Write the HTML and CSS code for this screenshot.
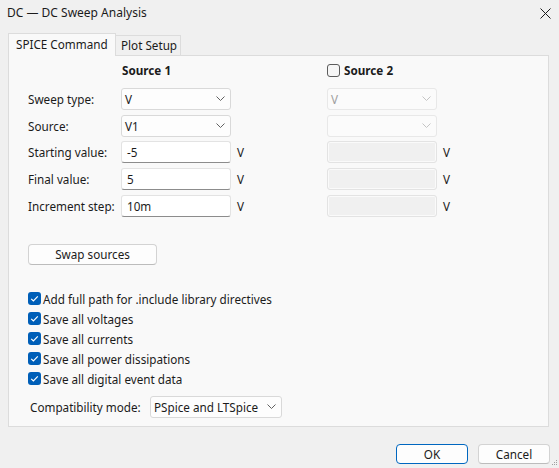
FILE: index.html
```html
<!DOCTYPE html>
<html>
<head>
<meta charset="utf-8">
<title>DC — DC Sweep Analysis</title>
<link rel="stylesheet" href="styles.css">
</head>
<body>
<div class="window">
  <div class="titlebar">
    <span class="title">DC — DC Sweep Analysis</span>
    <svg class="close" width="11" height="11" viewBox="0 0 11 11"><path d="M0.5 0.5L10.5 10.5M10.5 0.5L0.5 10.5" stroke="#1b1b1b" stroke-width="1" fill="none"/></svg>
  </div>
  <div class="tabs">
    <div class="tab active">SPICE Command</div>
    <div class="tab plain">Plot Setup</div>
  </div>
  <div class="panel">
    <div class="form">
      <div></div>
      <div class="head">Source 1</div>
      <div></div>
      <div class="head head2"><span class="cb off"></span>Source 2</div>
      <div></div>

      <div class="lbl">Sweep type:</div>
      <div class="select"><span>V</span><svg class="chev" width="9" height="5" viewBox="0 0 9 5"><path d="M0.5 0.5L4.5 4.5L8.5 0.5" stroke="#616161" fill="none"/></svg></div>
      <div></div>
      <div class="select disabled"><span>V</span><svg class="chev" width="9" height="5" viewBox="0 0 9 5"><path d="M0.5 0.5L4.5 4.5L8.5 0.5" stroke="#c4c4c4" fill="none"/></svg></div>
      <div></div>

      <div class="lbl">Source:</div>
      <div class="select"><span>V1</span><svg class="chev" width="9" height="5" viewBox="0 0 9 5"><path d="M0.5 0.5L4.5 4.5L8.5 0.5" stroke="#616161" fill="none"/></svg></div>
      <div></div>
      <div class="select disabled"><span></span><svg class="chev" width="9" height="5" viewBox="0 0 9 5"><path d="M0.5 0.5L4.5 4.5L8.5 0.5" stroke="#c4c4c4" fill="none"/></svg></div>
      <div></div>

      <div class="lbl">Starting value:</div>
      <div class="input">-5</div>
      <div class="unit">V</div>
      <div class="input disabled"></div>
      <div class="unit">V</div>

      <div class="lbl">Final value:</div>
      <div class="input">5</div>
      <div class="unit">V</div>
      <div class="input disabled"></div>
      <div class="unit">V</div>

      <div class="lbl">Increment step:</div>
      <div class="input">10m</div>
      <div class="unit">V</div>
      <div class="input disabled"></div>
      <div class="unit">V</div>
    </div>

    <button class="btn swap">Swap sources</button>

    <div class="checks">
      <div class="check"><span class="cb on"><svg width="13" height="13" viewBox="0 0 13 13"><path d="M3.2 6.8L5.4 9L9.8 4.4" stroke="#fff" stroke-width="1.2" fill="none"/></svg></span>Add full path for .include library directives</div>
      <div class="check"><span class="cb on"><svg width="13" height="13" viewBox="0 0 13 13"><path d="M3.2 6.8L5.4 9L9.8 4.4" stroke="#fff" stroke-width="1.2" fill="none"/></svg></span>Save all voltages</div>
      <div class="check"><span class="cb on"><svg width="13" height="13" viewBox="0 0 13 13"><path d="M3.2 6.8L5.4 9L9.8 4.4" stroke="#fff" stroke-width="1.2" fill="none"/></svg></span>Save all currents</div>
      <div class="check"><span class="cb on"><svg width="13" height="13" viewBox="0 0 13 13"><path d="M3.2 6.8L5.4 9L9.8 4.4" stroke="#fff" stroke-width="1.2" fill="none"/></svg></span>Save all power dissipations</div>
      <div class="check"><span class="cb on"><svg width="13" height="13" viewBox="0 0 13 13"><path d="M3.2 6.8L5.4 9L9.8 4.4" stroke="#fff" stroke-width="1.2" fill="none"/></svg></span>Save all digital event data</div>
    </div>

    <div class="compat">
      <span class="compat-lbl">Compatibility mode:</span>
      <div class="select wide"><span>PSpice and LTSpice</span><svg class="chev" width="9" height="5" viewBox="0 0 9 5"><path d="M0.5 0.5L4.5 4.5L8.5 0.5" stroke="#616161" fill="none"/></svg></div>
    </div>
  </div>
  <div class="footer">
    <button class="btn ok">OK</button>
    <button class="btn">Cancel</button>
  </div>
  <svg class="grip" width="6" height="6" viewBox="0 0 6 6"><rect x="4" y="0" width="1" height="1" fill="#a0a0a0"/><rect x="2" y="2" width="1" height="1" fill="#a0a0a0"/><rect x="4" y="2" width="1" height="1" fill="#a0a0a0"/><rect x="0" y="4" width="1" height="1" fill="#a0a0a0"/><rect x="2" y="4" width="1" height="1" fill="#a0a0a0"/><rect x="4" y="4" width="1" height="1" fill="#a0a0a0"/></svg>
</div>
</body>
</html>
```

FILE: styles.css
```css
* { box-sizing: border-box; margin: 0; padding: 0; }
html, body { width: 559px; height: 468px; overflow: hidden; }
body {
  background: #f0f0f0;
  font-family: "Noto Sans", "Open Sans", sans-serif;
  font-size: 11.7px;
  color: #1b1b1b;
}
.window { position: relative; width: 559px; height: 468px; display: flex; flex-direction: column; }

.titlebar {
  height: 26px;
  display: flex;
  align-items: center;
  justify-content: space-between;
  padding: 0 8px 0 7px;
  font-size: 12px;
}
.title { line-height: 26px; }
.close { display: block; }

.tabs {
  display: flex;
  align-items: flex-start;
  height: 22px;
  margin: 7px 0 0 8px;
}
.tab {
  position: relative;
  z-index: 1;
  border: 1px solid #dcdcdc;
  border-bottom: none;
  white-space: nowrap;
}
.tab.active {
  height: 23px;
  width: 108px;
  background: #f9f9f9;
  padding: 2px 0 0 7px;
  line-height: 17px;
}
.tab.plain {
  margin-top: 2px;
  height: 20px;
  width: 65px;
  background: #f0f0f0;
  border-left: none;
  padding: 1px 0 0 5px;
  line-height: 17px;
}

.panel {
  margin: 0 10px 0 8px;
  height: 372px;
  background: #f9f9f9;
  border: 1px solid #dcdcdc;
  padding: 6px 0 0 19px;
}

.form {
  display: grid;
  grid-template-columns: 93px 110px 96px 110px 1fr;
  grid-template-rows: 21px repeat(5, 22px);
  row-gap: 4.75px;
}
.head {
  font-weight: bold;
  height: 16px;
  line-height: 16px;
  padding-left: 1px;
  display: flex;
  align-items: center;
}
.head2 { gap: 4px; padding-left: 0; }
.lbl { display: flex; align-items: center; }

.select {
  display: flex;
  align-items: center;
  justify-content: space-between;
  height: 22px;
  background: #fdfdfd;
  border: 1px solid #d9d9d9;
  border-radius: 3px;
  padding: 0 5px 0 3px;
}
.select.disabled { background: #fbfbfb; border-color: #e8e8e8; color: #a0a0a0; }
.chev { display: block; }

.input {
  display: flex;
  align-items: center;
  height: 22px;
  background: #fff;
  border: 1px solid #e3e3e3;
  border-bottom-color: #8c8c8c;
  border-radius: 3px;
  padding: 0 5px;
}
.input.disabled {
  background: #f0f0f0;
  border: 1px solid #e3e3e3;
  box-shadow: inset 0 0 0 1px #fafafa;
}
.unit { display: flex; align-items: center; padding-left: 6px; }

.btn {
  font-family: inherit;
  font-size: 11.7px;
  color: #1b1b1b;
  background: #fdfdfd;
  border: 1px solid #d3d3d3;
  border-bottom-color: #bcbcbc;
  border-radius: 4px;
  height: 21px;
  line-height: 17px;
}
.swap { display: block; width: 129px; margin: 27px 0 0 0; }

.checks { margin-top: 24px; display: flex; flex-direction: column; }
.check { height: 20px; display: flex; align-items: center; gap: 2px; }
.cb {
  display: block;
  width: 13px;
  height: 13px;
  border-radius: 3px;
  flex: none;
}
.cb svg { display: block; }
.cb.on { background: #005fb8; }
.cb.off { background: #f6f6f6; border: 1px solid #5c5c5c; }

.compat { margin-top: 7px; display: flex; align-items: center; }
.compat-lbl { padding-left: 2px; width: 122px; }
.select.wide { width: 132px; }

.footer {
  display: flex;
  justify-content: flex-end;
  gap: 10px;
  padding: 17px 9px 0 0;
}
.footer .btn { width: 72px; height: 20px; line-height: 16px; }
.btn.ok { border: 1px solid #0067c0; }

.grip { position: absolute; right: 1px; bottom: 2px; display: block; }
```
